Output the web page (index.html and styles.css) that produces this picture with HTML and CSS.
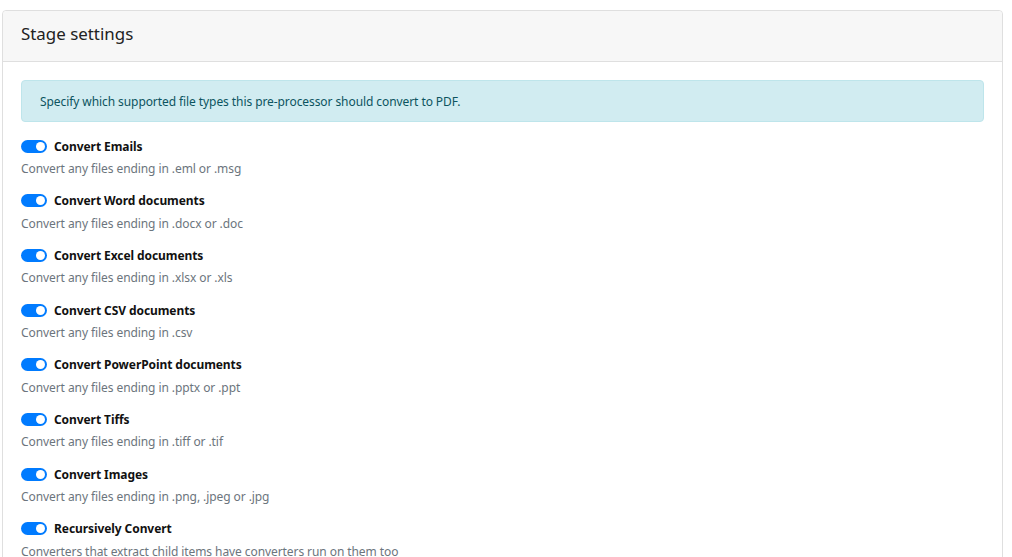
FILE: index.html
```html
<!DOCTYPE html>
<html>
<head>
<meta charset="utf-8">
<link rel="stylesheet" href="styles.css">
</head>
<body>
<div class="page">
  <div class="card">
    <div class="card-header">Stage settings</div>
    <div class="card-body">
      <div class="alert">Specify which supported file types this pre-processor should convert to PDF.</div>
      <div class="opt">
        <div class="opt-label"><span class="switch"></span>Convert Emails</div>
        <div class="opt-desc">Convert any files ending in .eml or .msg</div>
      </div>
      <div class="opt">
        <div class="opt-label"><span class="switch"></span>Convert Word documents</div>
        <div class="opt-desc">Convert any files ending in .docx or .doc</div>
      </div>
      <div class="opt">
        <div class="opt-label"><span class="switch"></span>Convert Excel documents</div>
        <div class="opt-desc">Convert any files ending in .xlsx or .xls</div>
      </div>
      <div class="opt">
        <div class="opt-label"><span class="switch"></span>Convert CSV documents</div>
        <div class="opt-desc">Convert any files ending in .csv</div>
      </div>
      <div class="opt">
        <div class="opt-label"><span class="switch"></span>Convert PowerPoint documents</div>
        <div class="opt-desc">Convert any files ending in .pptx or .ppt</div>
      </div>
      <div class="opt">
        <div class="opt-label"><span class="switch"></span>Convert Tiffs</div>
        <div class="opt-desc">Convert any files ending in .tiff or .tif</div>
      </div>
      <div class="opt">
        <div class="opt-label"><span class="switch"></span>Convert Images</div>
        <div class="opt-desc">Convert any files ending in .png, .jpeg or .jpg</div>
      </div>
      <div class="opt">
        <div class="opt-label"><span class="switch"></span>Recursively Convert</div>
        <div class="opt-desc">Converters that extract child items have converters run on them too</div>
      </div>
    </div>
  </div>
</div>
</body>
</html>
```

FILE: styles.css
```css
html, body {
  margin: 0;
  padding: 0;
  background: #fff;
  font-family: "Noto Sans", "Open Sans", sans-serif;
  color: #212529;
  overflow: hidden;
}
.page {
  padding: 10px 9px 0 2px;
}
.card {
  border: 1px solid #dfdfdf;
  border-radius: 4px;
  background: #fff;
}
.card-header {
  background: #f7f7f7;
  border-bottom: 1px solid #dfdfdf;
  border-radius: 4px 4px 0 0;
  height: 51px;
  box-sizing: border-box;
  padding: 0 18px 6px 18px;
  display: flex;
  align-items: center;
  font-size: 16.9px;
  color: #222;
}
.card-body {
  padding: 18px 18px 0 18px;
}
.alert {
  background: #d1ecf1;
  border: 1px solid #bee5eb;
  border-radius: 4px;
  color: #0c5460;
  font-size: 12px;
  letter-spacing: -0.08px;
  height: 42px;
  box-sizing: border-box;
  padding: 0 18px;
  display: flex;
  align-items: center;
  margin-bottom: 15px;
}
.opt {
  height: 54.7px;
}
.opt-label {
  display: flex;
  align-items: center;
  font-size: 12px;
  letter-spacing: -0.08px;
  font-weight: 700;
  color: #111;
  height: 18px;
}
.switch {
  position: relative;
  width: 26px;
  height: 13px;
  border-radius: 7px;
  background: #007bff;
  margin-right: 7px;
  flex: none;
}
.switch::after {
  content: "";
  position: absolute;
  right: 2px;
  top: 2px;
  width: 9px;
  height: 9px;
  border-radius: 50%;
  background: #fff;
}
.opt-desc {
  font-size: 12px;
  letter-spacing: -0.08px;
  color: #6c757d;
  margin-top: 5px;
}
```
